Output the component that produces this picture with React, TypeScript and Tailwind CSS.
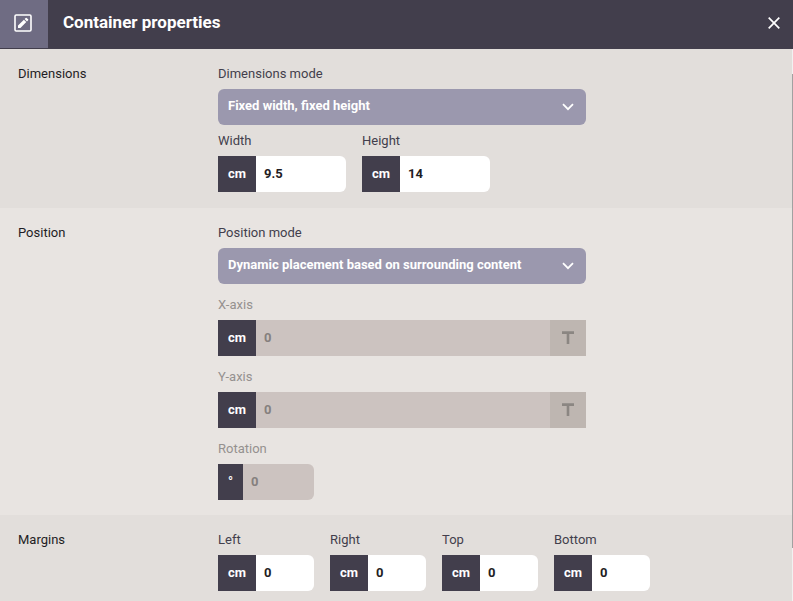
import { useId, useState } from "react";
import type { ReactNode } from "react";

type SectionProps = {
  title: string;
  className: string;
  children: ReactNode;
};

const Section = ({ title, className, children }: SectionProps) => (
  <section className={`flex px-[18px] pt-4 text-[13px] ${className}`}>
    <h2 className="w-[200px] shrink-0 leading-[18px] text-[#1f1d24]">{title}</h2>
    <div className="min-w-0 flex-1">{children}</div>
  </section>
);

type SelectFieldProps = {
  label: string;
  options: string[];
};

const SelectField = ({ label, options }: SelectFieldProps) => {
  const id = useId();

  return (
    <div className="w-full max-w-[368px]">
      <label
        htmlFor={id}
        className="mb-1.5 block leading-[18px] text-[#423e4c]"
      >
        {label}
      </label>
      <div className="relative">
        <select
          id={id}
          className="block h-9 w-full appearance-none rounded-md bg-[#9b98ae] pr-9 pb-[3px] pl-[10px] font-bold text-white outline-none"
        >
          {options.map((option) => (
            <option key={option}>{option}</option>
          ))}
        </select>
        <svg
          viewBox="0 0 12 8"
          className="pointer-events-none absolute top-[14px] right-3 h-2 w-3"
          fill="none"
          stroke="white"
          strokeWidth="1.8"
        >
          <path d="M1 1.2 6 6.2 11 1.2" />
        </svg>
      </div>
    </div>
  );
};

type UnitFieldProps = {
  label: string;
  unit?: string;
  initial: string;
  className: string;
  disabled?: boolean;
  withAnchor?: boolean;
};

const UnitField = ({
  label,
  unit = "cm",
  initial,
  className,
  disabled = false,
  withAnchor = false,
}: UnitFieldProps) => {
  const id = useId();
  const [value, setValue] = useState(initial);

  return (
    <div className={className}>
      <label
        htmlFor={id}
        className={`mb-1.5 block leading-[18px] ${disabled ? "text-[#95918f]" : "text-[#423e4c]"}`}
      >
        {label}
      </label>
      <div className="flex h-9 font-bold">
        <span className="flex shrink-0 items-center bg-[#423e4c] px-[10px] text-white">
          {unit}
        </span>
        <input
          id={id}
          type="text"
          value={value}
          disabled={disabled}
          onChange={(e) => setValue(e.target.value)}
          className={`w-full min-w-0 flex-1 px-2 outline-none ${
            disabled ? "bg-[#ccc3c0] text-[#85807e]" : "bg-white text-[#1f1d24]"
          } ${withAnchor ? "" : "rounded-r-md"}`}
        />
        {withAnchor && (
          <button
            type="button"
            disabled
            aria-label={`${label} anchor`}
            className="flex w-9 shrink-0 items-center justify-center bg-[#beb6b1]"
          >
            <svg viewBox="0 0 12 14" className="h-[14px] w-3" fill="#8b8682">
              <path d="M0 0.3h12v2.7H7.3V13H4.7V3H0z" />
            </svg>
          </button>
        )}
      </div>
    </div>
  );
};

const App = () => {
  return (
    <div className="flex h-screen flex-col overflow-hidden bg-[#e2dedb] font-[Roboto,sans-serif]">
      <header className="flex h-[49px] shrink-0 items-start bg-[#423e4c] text-white">
        <div className="flex h-12 w-12 items-center justify-center bg-[#6f6c83] pr-0.5 pb-0.5">
          <svg viewBox="0 0 18 18" className="h-[18px] w-[18px]">
            <rect
              x="1"
              y="1"
              width="16"
              height="16"
              rx="1.2"
              fill="none"
              stroke="white"
              strokeWidth="1.6"
            />
            <path
              fill="white"
              d="M4 14v-2.4l5.9-5.9 2.4 2.4L6.4 14zM10.6 5l1.1-1.1q.5-.5 1 0l1.4 1.4q.5.5 0 1L13 7.4z"
            />
          </svg>
        </div>
        <h1 className="ml-[15px] flex-1 text-[17px] leading-[44px] font-bold">
          Container properties
        </h1>
        <button
          type="button"
          aria-label="Close"
          className="flex h-[46px] w-[38px] cursor-pointer items-center justify-center"
        >
          <svg
            viewBox="0 0 12 12"
            className="h-3 w-3"
            fill="none"
            stroke="white"
            strokeWidth="1.7"
          >
            <path d="M.7.7 11.3 11.3M11.3.7.7 11.3" />
          </svg>
        </button>
      </header>

      <div className="flex min-h-0 flex-1">
        <main className="min-w-0 flex-1 overflow-hidden">
          <Section title="Dimensions" className="bg-[#e2dedb] pb-4">
            <SelectField
              label="Dimensions mode"
              options={["Fixed width, fixed height"]}
            />
            <div className="mt-[7px] flex gap-4">
              <UnitField label="Width" initial="9.5" className="w-32" />
              <UnitField label="Height" initial="14" className="w-32" />
            </div>
          </Section>

          <Section title="Position" className="bg-[#e8e4e1] pb-[15px]">
            <div className="flex flex-col gap-3">
              <SelectField
                label="Position mode"
                options={["Dynamic placement based on surrounding content"]}
              />
              <UnitField
                label="X-axis"
                initial="0"
                className="w-full max-w-[368px]"
                disabled
                withAnchor
              />
              <UnitField
                label="Y-axis"
                initial="0"
                className="w-full max-w-[368px]"
                disabled
                withAnchor
              />
              <UnitField
                label="Rotation"
                unit="°"
                initial="0"
                className="w-24"
                disabled
              />
            </div>
          </Section>

          <Section title="Margins" className="bg-[#e2dedb] pb-4">
            <div className="flex gap-4">
              <UnitField label="Left" initial="0" className="w-24" />
              <UnitField label="Right" initial="0" className="w-24" />
              <UnitField label="Top" initial="0" className="w-24" />
              <UnitField label="Bottom" initial="0" className="w-24" />
            </div>
          </Section>
        </main>

        {/* thin scroll track */}
        <div className="w-px bg-[#f1f1f1] pt-[25px]">
          <div className="h-[90%] bg-[#a1a1a1]" />
        </div>
      </div>
    </div>
  );
};

export default App;
